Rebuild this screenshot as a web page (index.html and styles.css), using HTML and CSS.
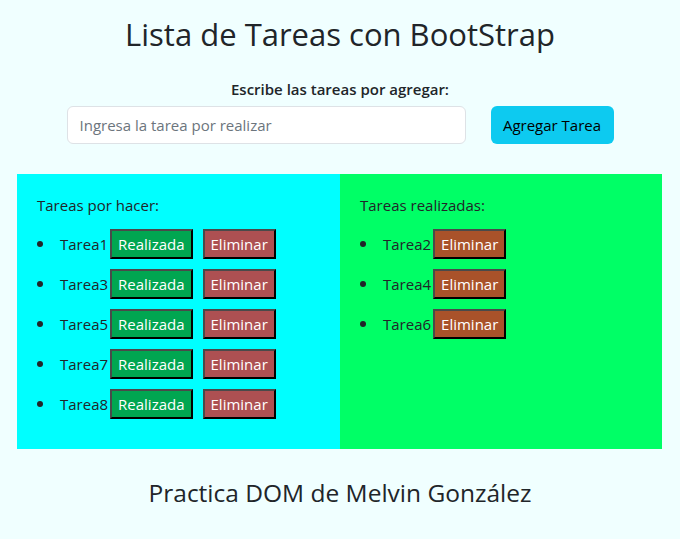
FILE: index.html
```html
<!DOCTYPE html>
<html lang="es">
<head>
<meta charset="utf-8">
<title>Lista de Tareas</title>
<link rel="stylesheet" href="styles.css">
</head>
<body>
  <header class="top">
    <h2 class="title">Lista de Tareas con BootStrap</h2>
    <label class="label" for="tarea">Escribe las tareas por agregar:</label>
    <div class="form-row">
      <input id="tarea" class="input" type="text" placeholder="Ingresa la tarea por realizar">
      <button class="btn-add" type="button">Agregar Tarea</button>
    </div>
  </header>

  <main class="panels">
    <section class="panel panel-todo">
      <h6 class="panel-title">Tareas por hacer:</h6>
      <ul class="list">
        <li class="item"><span class="name">Tarea1</span><button class="btn btn-done">Realizada</button><button class="btn btn-del">Eliminar</button></li>
        <li class="item"><span class="name">Tarea3</span><button class="btn btn-done">Realizada</button><button class="btn btn-del">Eliminar</button></li>
        <li class="item"><span class="name">Tarea5</span><button class="btn btn-done">Realizada</button><button class="btn btn-del">Eliminar</button></li>
        <li class="item"><span class="name">Tarea7</span><button class="btn btn-done">Realizada</button><button class="btn btn-del">Eliminar</button></li>
        <li class="item"><span class="name">Tarea8</span><button class="btn btn-done">Realizada</button><button class="btn btn-del">Eliminar</button></li>
      </ul>
    </section>
    <section class="panel panel-done">
      <h6 class="panel-title">Tareas realizadas:</h6>
      <ul class="list">
        <li class="item"><span class="name">Tarea2</span><button class="btn btn-del2">Eliminar</button></li>
        <li class="item"><span class="name">Tarea4</span><button class="btn btn-del2">Eliminar</button></li>
        <li class="item"><span class="name">Tarea6</span><button class="btn btn-del2">Eliminar</button></li>
      </ul>
    </section>
  </main>

  <footer class="footer">
    <h3 class="footer-title">Practica DOM de Melvin González</h3>
  </footer>
</body>
</html>
```

FILE: styles.css
```css
* { box-sizing: border-box; }

body {
  margin: 0;
  background: #f0ffff;
  color: #212529;
  font-family: "Open Sans", "Noto Sans", sans-serif;
  font-size: 15px;
}

.top {
  display: flex;
  flex-direction: column;
  align-items: center;
  padding-top: 16px;
}

.title {
  margin: 0;
  font-size: 31px;
  font-weight: 500;
  line-height: 1.2;
}

.label {
  margin-top: 26px;
  font-size: 15px;
  font-weight: 600;
  line-height: 20px;
}

.form-row {
  display: flex;
  gap: 25px;
  margin-top: 7px;
}

.input {
  width: 399px;
  height: 38px;
  border: 1px solid #dee2e6;
  border-radius: 6px;
  background: #fff;
  padding: 0 12px;
  font: inherit;
  font-size: 15px;
  color: #212529;
}
.input::placeholder { color: #6c757d; }

.btn-add {
  width: 123px;
  height: 38px;
  border: 0;
  border-radius: 6px;
  background: #0dcaf0;
  color: #000;
  font: inherit;
  font-size: 15px;
  padding: 0;
}

.panels {
  display: grid;
  grid-template-columns: 323px 322px;
  margin: 30px 0 0 17px;
  height: 275px;
}

.panel { padding: 20px 20px 0 20px; }
.panel-todo { background: #00ffff; }
.panel-done { background: #00ff66; }

.panel-title {
  margin: 0;
  font-size: 15px;
  font-weight: 500;
  line-height: 22px;
}

.list {
  margin: 13px 0 0 0;
  padding: 0;
  list-style: none;
}

.item {
  display: flex;
  align-items: center;
  height: 30px;
  margin-bottom: 10px;
}
.item::before {
  content: "";
  width: 6px;
  height: 6px;
  border-radius: 50%;
  background: #212529;
  margin: 0 17px 0 0;
}

.name { margin-right: 2px; }

.btn {
  height: 30px;
  padding: 0 6px;
  font: inherit;
  font-size: 15px;
  color: #fff;
  border: 2px solid;
  border-color: #4a4a4a #000 #000 #4a4a4a;
  line-height: 24px;
}
.btn-done { background: #00a651; margin-right: 10px; }
.btn-del { background: #ad5052; }
.btn-del2 { background: #a9522a; }

.footer {
  text-align: center;
  padding-top: 29px;
}
.footer-title {
  margin: 0;
  font-size: 24.5px;
  font-weight: 500;
  line-height: 1.2;
}
```
